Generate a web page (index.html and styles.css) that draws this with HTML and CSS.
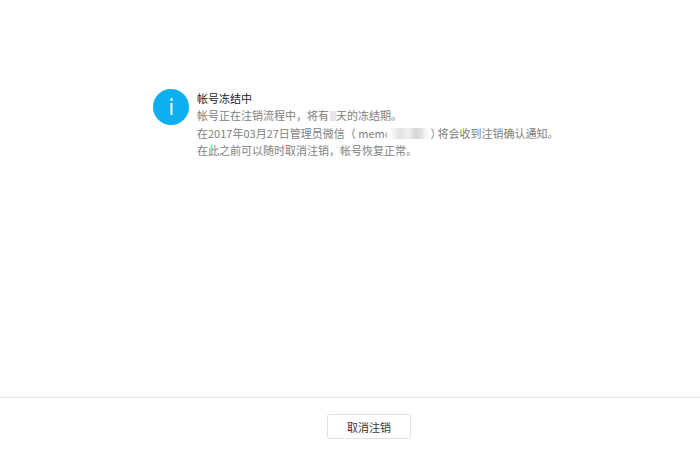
FILE: index.html
```html
<!DOCTYPE html>
<html lang="zh-CN">
<head>
<meta charset="utf-8">
<title>帐号冻结中</title>
<link rel="stylesheet" href="styles.css">
</head>
<body>
<main class="content">
  <div class="notice">
    <svg class="icon" width="36" height="36" viewBox="0 0 36 36" aria-hidden="true">
      <circle cx="18" cy="18" r="18" fill="#0dafee"/>
      <rect x="17.5" y="9" width="2" height="3" fill="#fff"/>
      <rect x="17.5" y="14" width="2" height="12" fill="#fff"/>
    </svg>
    <div class="text">
      <h1 class="title">帐号冻结中</h1>
      <p class="line">帐号正在注销流程中，将有<span class="mask-days"></span>天的冻结期。</p>
      <p class="line">在2017年03月27日管理员微信（ memo<span class="mask-name"></span><span class="close">）</span>将会收到注销确认通知。</p>
      <p class="line">在此之前可以随时取消注销，帐号恢复正常。</p>
    </div>
  </div>
</main>
<footer class="footer">
  <button class="cancel" type="button">取消注销</button>
</footer>
</body>
</html>
```
FILE: styles.css
```css
* { box-sizing: border-box; }
html, body { height: 100%; }
body {
  margin: 0;
  background: #fff;
  font-family: "Noto Sans CJK SC", "Liberation Sans", sans-serif;
  font-size: 11px;
  display: flex;
  flex-direction: column;
  overflow: hidden;
}
.content {
  height: 397px;
  padding: 89px 0 0 153px;
}
.notice { display: flex; gap: 8px; }
.icon { flex: none; }
.text { color: #808080; }
.title { margin: 0; height: 18px; line-height: 18px; font-size: 11px; font-weight: 400; color: #222; }
.line { margin: 0; height: 17.6px; line-height: 17.6px; white-space: nowrap; }
.mask-days {
  display: inline-block;
  width: 6px;
  height: 10px;
  margin-left: 1px;
  vertical-align: -1px;
  background: #e6e6e6;
}
.mask-name {
  display: inline-block;
  width: 42px;
  height: 11px;
  margin-left: -3px;
  vertical-align: -1px;
  background: linear-gradient(90deg, #fff 0, #f4f4f4 12%, #e2e2e2 28%, #f0f0f0 48%, #d6d6d6 66%, #e2e2e2 80%, #f4f4f4 90%, #fff 100%);
  box-shadow: 0 0 2px 1px #fff;
}
.close { letter-spacing: -4px; }
.footer {
  height: 52px;
  border-top: 1px solid #e6e6e6;
  padding-top: 16px;
  display: flex;
  justify-content: center;
}
.cancel {
  width: 84px;
  height: 25px;
  padding: 0;
  margin-left: 38px;
  background: #fff;
  border: 1px solid #e4e4e4;
  border-radius: 2px;
  color: #333;
  font: inherit;
}
```
